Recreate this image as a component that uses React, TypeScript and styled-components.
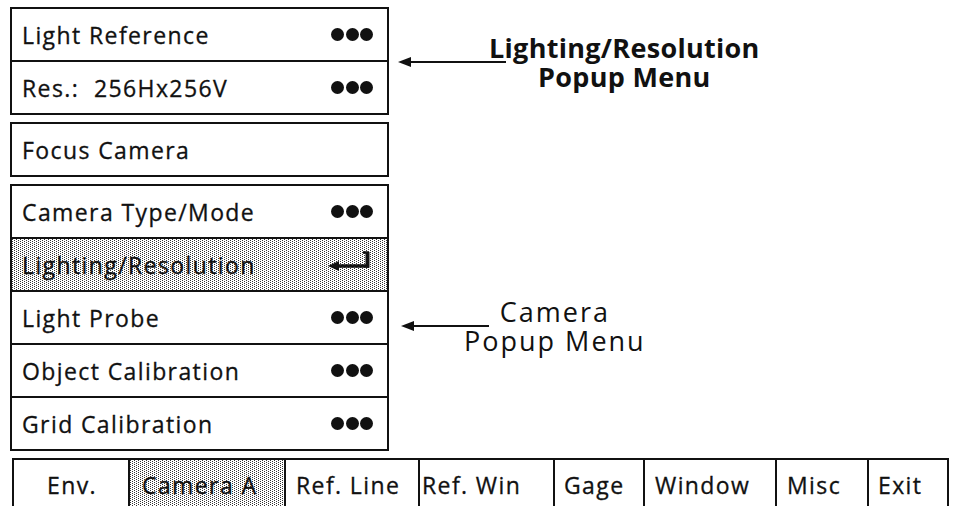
import React from 'react'
import styled, { createGlobalStyle, css } from 'styled-components'

const GlobalStyle = createGlobalStyle`
  html, body {
    margin: 0;
    padding: 0;
    background: #fff;
    overflow: hidden;
  }
  body {
    font-family: "Open Sans", "Liberation Sans", sans-serif;
    color: #111;
  }
`

// halftone grey of the selected items
const stipple = css`
  background-color: #fff;
  background-image:
    conic-gradient(from 270deg at 1px 1px, #333 25%, transparent 0),
    conic-gradient(from 270deg at 1px 1px, #333 25%, transparent 0);
  background-size: 4px 2px;
  background-position: 0 0, 2px 1px;
`

const Page = styled.div`
  width: 961px;
  height: 506px;
  box-sizing: border-box;
  padding: 7px 0 0 10px;
  display: flex;
  flex-direction: column;
`

const Upper = styled.div`
  display: flex;
`

const MenuColumn = styled.div`
  width: 379px;
  display: flex;
  flex-direction: column;
  gap: 7px;
`

const MenuBox = styled.div`
  border: 2px solid #111;
  display: flex;
  flex-direction: column;
`

const MenuRow = styled.div<{ $shaded?: boolean }>`
  height: 51px;
  display: flex;
  align-items: center;
  justify-content: space-between;
  padding: 0 14px 0 10px;
  font-size: 23px;
  font-weight: 500;
  letter-spacing: 1.4px;
  -webkit-text-stroke: 0.3px #111;
  white-space: nowrap;
  & + & {
    border-top: 2px solid #111;
  }
  ${p => p.$shaded && stipple}
`

const Dots = styled.span`
  display: flex;
  gap: 1.5px;
`

const Dot = styled.span`
  width: 13px;
  height: 13px;
  border-radius: 50%;
  background: #111;
`

const ReturnIcon = styled.svg`
  margin-top: -10px;
  margin-right: 1px;
`

const Notes = styled.div`
  display: flex;
  flex-direction: column;
  margin-left: 9px;
`

const Callout = styled.div<{ $top: number; $left: number }>`
  display: flex;
  align-items: center;
  margin-top: ${p => p.$top}px;
  padding-left: ${p => p.$left}px;
`

const CalloutText = styled.div<{ $bold?: boolean; $shift: number }>`
  margin-left: ${p => -p.$shift}px;
  text-align: center;
  font-size: 27px;
  line-height: 29px;
  font-weight: ${p => (p.$bold ? 700 : 400)};
  letter-spacing: ${p => (p.$bold ? 0.3 : 2)}px;
  white-space: nowrap;
`

const TabBar = styled.div`
  align-self: flex-start;
  display: flex;
  margin: 7px 0 0 2px;
  height: 47px;
  border-top: 2px solid #111;
`

const Tab = styled.div<{ $w: number; $pl: number; $shaded?: boolean; $last?: boolean }>`
  box-sizing: border-box;
  width: ${p => p.$w}px;
  padding: 3px 0 0 ${p => p.$pl}px;
  border-left: 2px solid #111;
  ${p => p.$last && 'border-right: 2px solid #111;'}
  display: flex;
  align-items: center;
  font-size: 23px;
  font-weight: 500;
  letter-spacing: 1.4px;
  -webkit-text-stroke: 0.3px #111;
  white-space: nowrap;
  ${p => p.$shaded && stipple}
`

function More() {
  return (
    <Dots>
      <Dot />
      <Dot />
      <Dot />
    </Dots>
  )
}

function Enter() {
  return (
    <ReturnIcon width="44" height="22" viewBox="0 0 44 22">
      <polygon points="0,17 11,12 11,22" fill="#111" />
      <line x1="9" y1="17" x2="41" y2="17" stroke="#111" strokeWidth="3.5" />
      <line x1="39.5" y1="3" x2="39.5" y2="18.7" stroke="#111" strokeWidth="4" />
      <line x1="35" y1="3.5" x2="40" y2="3.5" stroke="#111" strokeWidth="2.5" />
    </ReturnIcon>
  )
}

function LeftArrow({ len }: { len: number }) {
  return (
    <svg width={len} height="14" viewBox={`0 0 ${len} 14`}>
      <polygon points="0,7 13,2 13,12" fill="#111" />
      <line x1="10" y1="7" x2={len} y2="7" stroke="#111" strokeWidth="2" />
    </svg>
  )
}

const tabs = [
  { label: 'Env.', w: 116, pl: 33 },
  { label: 'Camera A', w: 156, pl: 12, shaded: true },
  { label: 'Ref. Line', w: 134, pl: 10 },
  { label: 'Ref. Win', w: 135, pl: 2 },
  { label: 'Gage', w: 90, pl: 9 },
  { label: 'Window', w: 132, pl: 10 },
  { label: 'Misc', w: 92, pl: 10 },
  { label: 'Exit', w: 82, pl: 9, last: true },
]

export default function App() {
  return (
    <>
      <GlobalStyle />
      <Page>
        <Upper>
          <MenuColumn>
            <MenuBox>
              <MenuRow>
                Light Reference <More />
              </MenuRow>
              <MenuRow>
                Res.:&nbsp; 256Hx256V <More />
              </MenuRow>
            </MenuBox>
            <MenuBox>
              <MenuRow>Focus Camera</MenuRow>
            </MenuBox>
            <MenuBox>
              <MenuRow>
                Camera Type/Mode <More />
              </MenuRow>
              <MenuRow $shaded>
                Lighting/Resolution <Enter />
              </MenuRow>
              <MenuRow>
                Light Probe <More />
              </MenuRow>
              <MenuRow>
                Object Calibration <More />
              </MenuRow>
              <MenuRow>
                Grid Calibration <More />
              </MenuRow>
            </MenuBox>
          </MenuColumn>
          <Notes>
            <Callout $top={26} $left={0}>
              <LeftArrow len={108} />
              <CalloutText $bold $shift={17}>
                Lighting/Resolution
                <br />
                Popup Menu
              </CalloutText>
            </Callout>
            <Callout $top={206} $left={3}>
              <LeftArrow len={88} />
              <CalloutText $shift={25}>
                Camera
                <br />
                Popup Menu
              </CalloutText>
            </Callout>
          </Notes>
        </Upper>
        <TabBar>
          {tabs.map(t => (
            <Tab key={t.label} $w={t.w} $pl={t.pl} $shaded={t.shaded} $last={t.last}>
              {t.label}
            </Tab>
          ))}
        </TabBar>
      </Page>
    </>
  )
}
